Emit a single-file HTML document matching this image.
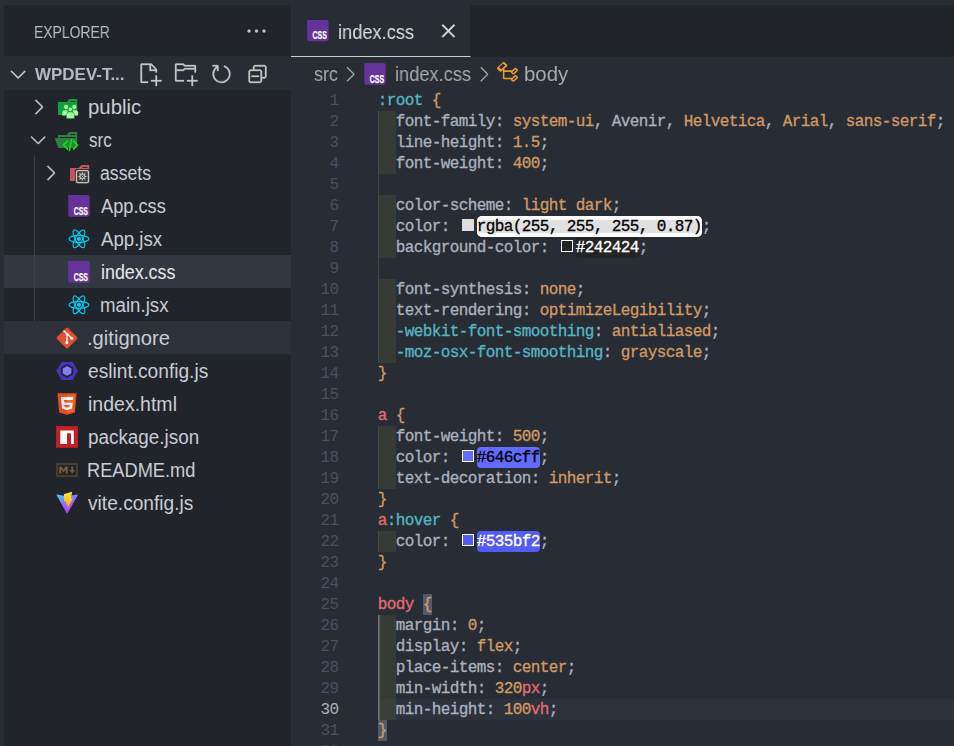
<!DOCTYPE html>
<html>
<head>
<meta charset="utf-8">
<title>index.css</title>
<style>
*{box-sizing:border-box;margin:0;padding:0}
html,body{width:954px;height:746px;overflow:hidden;background:#282c34}
body{position:relative;font-family:"Liberation Sans",sans-serif;color:#c5cad3}
.abs{position:absolute}
#side{left:4px;top:5px;width:287px;height:741px;background:#21252b}
#sechead{left:0;top:56px;width:291px;height:34px;background:#282c34}
#tabs{left:291px;top:5px;width:663px;height:52px;background:#21252b}
#tab{left:291px;top:5px;width:180px;height:52px;background:#282c34;border-bottom:1px solid #cdcdcd;border-right:1px solid #1d2025}
.ui{position:absolute;white-space:nowrap;font-size:19.5px;line-height:33px;height:33px;color:#c8ccd4;transform-origin:0 50%}
.row{position:absolute;left:4px;width:287px;height:33px}
/* code */
#code{left:0;top:90px;width:954px;height:656px}
.ln{position:absolute;left:300px;width:38.4px;text-align:right;font-family:"Liberation Mono",monospace;font-size:16px;letter-spacing:-0.6px;line-height:21px;height:21px;color:#495162;margin-top:1px}
.cl{position:absolute;left:377.7px;white-space:pre;font-family:"Liberation Mono",monospace;font-size:16px;letter-spacing:-0.6px;line-height:21px;height:21px;color:#abb2bf;-webkit-text-stroke:0.3px currentColor;margin-top:1px}
.ind{position:absolute;left:378px;width:18px;background:#373b35}
.gl{position:absolute;left:378px;width:1.4px;background:#3d424a}
.c{color:#56b6c2}.o{color:#d19a66}.r{color:#e06c75}.g{color:#abb2bf}
.sw{display:inline-block;width:12px;height:12px;margin:0 3px;vertical-align:0px;border:1px solid #eee}
.hl{display:inline-block;height:21px;border-radius:4px;margin-top:-1px;vertical-align:top;padding-top:1px}
.bm{background:#515a6b;display:inline-block;height:21px;margin-top:-1px;vertical-align:top;padding-top:1px}
</style>
</head>
<body>
<div id="side" class="abs"></div>
<div id="sechead" class="abs"></div>
<div id="tabs" class="abs"></div>
<div id="tab" class="abs"></div>

<div class="row abs" style="top:255px;background:#323842"></div>
<div class="row abs" style="top:321px;background:#2c313a"></div>
<div class="ui" style="left:87.77px;top:91px;font-size:19.5px;font-weight:normal;color:#c8ccd4;transform:scaleX(1.0460)">public</div>
<div class="ui" style="left:88.75px;top:124px;font-size:19.5px;font-weight:normal;color:#c8ccd4;transform:scaleX(0.8704)">src</div>
<div class="ui" style="left:100.05px;top:157px;font-size:19.5px;font-weight:normal;color:#c8ccd4;transform:scaleX(0.9071)">assets</div>
<div class="ui" style="left:100.74px;top:190px;font-size:19.5px;font-weight:normal;color:#c8ccd4;transform:scaleX(0.9343)">App.css</div>
<div class="ui" style="left:100.76px;top:223px;font-size:19.5px;font-weight:normal;color:#c8ccd4;transform:scaleX(0.9554)">App.jsx</div>
<div class="ui" style="left:101.19px;top:256px;font-size:19.5px;font-weight:normal;color:#e6e8ec;transform:scaleX(0.9146)">index.css</div>
<div class="ui" style="left:99.85px;top:289px;font-size:19.5px;font-weight:normal;color:#c8ccd4;transform:scaleX(0.9577)">main.jsx</div>
<div class="ui" style="left:87.36px;top:322px;font-size:19.5px;font-weight:normal;color:#c8ccd4;transform:scaleX(1.0342)">.gitignore</div>
<div class="ui" style="left:88.41px;top:355px;font-size:19.5px;font-weight:normal;color:#c8ccd4;transform:scaleX(0.9820)">eslint.config.js</div>
<div class="ui" style="left:88.40px;top:388px;font-size:19.5px;font-weight:normal;color:#c8ccd4;transform:scaleX(1.0011)">index.html</div>
<div class="ui" style="left:88.41px;top:421px;font-size:19.5px;font-weight:normal;color:#c8ccd4;transform:scaleX(0.9675)">package.json</div>
<div class="ui" style="left:87.48px;top:454px;font-size:19.5px;font-weight:normal;color:#c8ccd4;transform:scaleX(0.9351)">README.md</div>
<div class="ui" style="left:88.39px;top:487px;font-size:19.5px;font-weight:normal;color:#c8ccd4;transform:scaleX(0.9824)">vite.config.js</div>

<svg class="abs" style="left:0;top:0" width="954" height="746" viewBox="0 0 954 746">
<defs>
<path id="chr" d="M10.072 8.024L5.715 3.667l.618-.62L11 7.716v.618L6.333 13l-.618-.619 4.357-4.357z"/>
<path id="chd" d="M7.976 10.072l4.357-4.357.62.618L8.284 11h-.618L3 6.333l.619-.618 4.357 4.357z"/>
<g id="cssi">
<path d="M0 0H19.2Q21.5 0 21.5 2.3V19.3Q21.5 21.8 19 21.8H2.6Q0 21.8 0 19.2Z" fill="#66339a"/>
<text x="5.5" y="20" font-family="Liberation Sans, sans-serif" font-weight="bold" font-size="11.2" fill="#fff" stroke="#fff" stroke-width="0.25" textLength="14.2" lengthAdjust="spacingAndGlyphs">CSS</text>
</g>
<g id="react" fill="none" stroke="#05c8ee" stroke-width="1.25">
<ellipse cx="0" cy="0" rx="10" ry="3.6"/>
<ellipse cx="0" cy="0" rx="10" ry="3.6" transform="rotate(60)"/>
<ellipse cx="0" cy="0" rx="10" ry="3.6" transform="rotate(120)"/>
<circle cx="0" cy="0" r="2.1" fill="#05c8ee" stroke="none"/>
</g>
<linearGradient id="vg" x1="0" y1="0" x2="0.55" y2="1"><stop offset="0" stop-color="#41d1ff"/><stop offset="0.55" stop-color="#8f6cff"/><stop offset="1" stop-color="#bd34fe"/></linearGradient>
<linearGradient id="vb" x1="0" y1="0" x2="0" y2="1"><stop offset="0" stop-color="#ffe24a"/><stop offset="0.5" stop-color="#ffc61a"/><stop offset="1" stop-color="#ffa800"/></linearGradient>
</defs>
<!-- chevrons -->
<g fill="#c8c8c8" stroke="#c8c8c8" stroke-width="0.2">
<use href="#chd" transform="translate(6.2 62) scale(1.5)"/>
<use href="#chr" transform="translate(26.5 95) scale(1.5)"/>
<use href="#chd" transform="translate(26.2 127.6) scale(1.5)"/>
<use href="#chr" transform="translate(38.5 161) scale(1.5)"/>
</g>
<!-- indent guide -->
<rect x="34" y="156" width="1" height="165" fill="#3b4048"/>
<!-- folder public -->
<g>
<path d="M58 102H66.8L68.6 99.6Q69 99 69.8 99H77.2V115H58Z" fill="#10a13b"/>
<rect x="70.2" y="101.1" width="5.2" height="0.9" fill="#21252b"/>
<g fill="#a9f8a2">
<circle cx="66.1" cy="107" r="2.15"/><circle cx="74.4" cy="107" r="2.15"/>
<path d="M62.3 115.6V112.6Q62.3 110.2 64.7 110.2H67.5V115.6Z"/>
<path d="M78.1 115.6V112.6Q78.1 110.2 75.7 110.2H72.9V115.6Z"/>
</g>
<g fill="#a9f8a2" stroke="#10a13b" stroke-width="0.6">
<circle cx="70.4" cy="109.3" r="2.1"/>
<path d="M66.5 118.3V114.6Q66.5 112 69.1 112H71.7Q74.3 112 74.3 114.6V118.3Q70.4 118.8 66.5 118.3Z"/>
</g>
</g>
<!-- folder src (open) -->
<g>
<path d="M58 135H66.8L68.6 132.7Q69 132.1 69.8 132.1H77.1V147.8H58Z" fill="#2f8046"/>
<rect x="70.2" y="134.1" width="5.2" height="0.9" fill="#21252b"/>
<rect x="60" y="137" width="15.2" height="1.1" fill="#21252b"/>
<path d="M54.9 138.2H74.8L76.3 147.8H58Z" fill="#2f8046"/>
<g fill="none" stroke="#14dc18" stroke-width="1.7" stroke-linecap="round" stroke-linejoin="round">
<path d="M67.5 141.1L63.4 144.9L67.6 149.1"/>
<path d="M71.5 139.6L69.4 150.4"/>
<path d="M73.5 141.1L77.5 144.9L73.5 149.1"/>
</g>
</g>
<!-- folder assets -->
<g>
<path d="M70 168H78.9L80.7 165.7Q81.1 165.1 81.9 165.1H89.2V181H70Z" fill="#c4555a"/>
<rect x="82.2" y="167" width="5.3" height="0.9" fill="#21252b"/>
<rect x="74.9" y="169" width="15.1" height="15.2" rx="1.5" fill="#333537"/>
<rect x="76.5" y="170.6" width="12" height="12" rx="1.6" fill="#3a3a3a" stroke="#c4c4c4" stroke-width="1.3"/>
<g fill="#c8c8c8">
<path d="M82.4 171.7L83.5 174.2H81.3Z"/><path d="M82.4 181.1L83.5 178.6H81.3Z"/>
<path d="M77.7 176.4L80.2 175.3V177.5Z"/><path d="M87.1 176.4L84.6 175.3V177.5Z"/>
<path d="M79.1 173.1L81.6 174L80 175.6Z"/><path d="M85.7 173.1L83.2 174L84.8 175.6Z"/>
<path d="M79.1 179.7L81.6 178.8L80 177.2Z"/><path d="M85.7 179.7L83.2 178.8L84.8 177.2Z"/>
</g>
<circle cx="82.4" cy="176.4" r="2" fill="none" stroke="#c8c8c8" stroke-width="0.9"/>
<circle cx="82.6" cy="176.4" r="0.6" fill="#c8c8c8"/>
</g>
<!-- css / react file icons -->
<use href="#cssi" transform="translate(68.2 195)"/>
<use href="#react" transform="translate(78.95 238.85)"/>
<use href="#cssi" transform="translate(68.2 261)"/>
<use href="#react" transform="translate(78.95 304.85)"/>
<!-- git -->
<g>
<rect x="-7.8" y="-7.8" width="15.6" height="15.6" rx="1.5" transform="translate(67.05 337.95) rotate(45)" fill="#e14e31"/>
<g stroke="#f2f2f2" stroke-width="1.4" fill="none" stroke-linecap="butt">
<path d="M63.5 330.4L71.5 338.1"/><path d="M67.1 334.2L66.9 342.5"/>
</g>
<g fill="#ffffff"><circle cx="67.1" cy="334" r="1.5"/><circle cx="71.6" cy="338.2" r="1.55"/><circle cx="66.9" cy="342.6" r="1.6"/></g>
</g>
<!-- eslint -->
<g>
<path d="M56.4 371L61.6 361.9H72.6L77.8 371L72.6 380.1H61.6Z" fill="#4b32c3"/>
<path d="M67.05 364L73.2 367.5V374.4L67.05 377.9L60.9 374.4V367.5Z" fill="#21252b"/>
<path d="M67.05 366.1L71.4 368.5V373.4L67.05 375.8L62.7 373.4V368.5Z" fill="#8080f2"/>
</g>
<!-- html5 -->
<g>
<path d="M57.5 393.2H76.6L74.9 412.5L67.05 414.7L59.2 412.5Z" fill="#e44d26"/>
<path d="M67.05 394.8H75L73.5 411.3L67.05 413.1Z" fill="#f16529"/>
<path d="M61 397H73.1L72.85 400.1H64L64.2 402.7H72.6L72 408.6L67.05 410.1L62.1 408.6L61.85 405.6H64.3L64.45 407L67.05 407.8L69.65 407L69.9 404.7H61.9Z" fill="#ffffff"/>
<path d="M61 397H67.05V400.1H64L64.2 402.7H67.05V404.7H61.9ZM61.85 405.6H64.3L64.45 407L67.05 407.8V410.1L62.1 408.6Z" fill="#ebebeb"/>
</g>
<!-- npm -->
<g>
<rect x="56.1" y="426.1" width="21.8" height="21.7" fill="#c42127"/>
<path d="M60.3 430.4H73.8V443.9H71V433.2H67V443.9H60.3Z" fill="#ffffff"/>
</g>
<!-- markdown -->
<g>
<rect x="57.05" y="463.95" width="19.9" height="12.1" fill="none" stroke="#493c2f" stroke-width="2.1"/>
<path d="M59.3 473.6V466.4H61.4L63.5 469.6L65.6 466.4H67.7V473.6H65.7V469.4L63.5 472.4L61.3 469.4V473.6Z" fill="#7a5a37"/>
<path d="M71.3 466.4H73.2V470.1H75.2L72.25 473.4L69.3 470.1H71.3Z" fill="#7a5a37"/>
</g>
<!-- vite -->
<g>
<path d="M56.6 494.9Q56 494.6 56.8 494.5L67 496.3L77.3 494.5Q78.1 494.6 77.6 495.4L67.7 513.1Q67.1 513.9 66.5 513.1Z" fill="url(#vg)"/>
<path d="M72.2 491.7L64 493.9V501.6L66.4 501.3L66 504.7L68 504.4L67 509.8L72.9 498.2L70.9 498.6Z" fill="url(#vb)"/>
</g>
<!-- header actions -->
<g fill="#c5c5c5" stroke="#c5c5c5" stroke-width="0.2" transform="translate(0.5 0)">
<path transform="translate(244 19) scale(1.5)" d="M4 8a1 1 0 1 1-2 0 1 1 0 0 1 2 0zm5 0a1 1 0 1 1-2 0 1 1 0 0 1 2 0zm5 0a1 1 0 1 1-2 0 1 1 0 0 1 2 0z"/>
<path transform="translate(137 62) scale(1.5)" fill-rule="evenodd" d="M9.5 1.1l3.4 3.5.1.4v2h-1V6H8V2H3v11h4v1H2.5l-.5-.5v-12l.5-.5h6.7l.3.1zM9 2v3h2.9L9 2zm4 14h-1v-3H9v-1h3V9h1v3h3v1h-3v3z"/>
<path transform="translate(173 62) scale(1.5)" fill-rule="evenodd" d="M14.5 2H7.71l-.85-.85L6.51 1h-5l-.5.5v11l.5.5H7v-1H1.99V6h4.49l.35-.15.86-.86H14v1.5l-.001.51h1.011V2.5L14.5 2zm-.51 2h-6.5l-.35.15-.86.86H2v-3h4.29l.85.85.36.15H14l-.01.99zM13 16h-1v-3H9v-1h3V9h1v3h3v1h-3v3z"/>
<path transform="translate(209 62) scale(1.5)" fill-rule="evenodd" d="M4.681 3H2V2h3.5l.5.5V6H5V4a5 5 0 1 0 4.53-.761l.302-.954A6 6 0 1 1 4.681 3z"/>
<g transform="translate(245 62) scale(1.5)"><path d="M9 9H4v1h5V9z"/><path fill-rule="evenodd" d="M5 3l1-1h7l1 1v7l-1 1h-2v2l-1 1H3l-1-1V6l1-1h2V3zm1 2h4l1 1v4h2V3H6v2zm4 1H3v7h7V6z"/></g>
</g>
<!-- tab -->
<use href="#cssi" transform="translate(307.1 20) scale(1 0.975)"/>
<path transform="translate(436.4 18.9) scale(1.5)" fill="#dcdcdc" stroke="#dcdcdc" stroke-width="0.25" d="M8 8.707l3.646 3.647.708-.707L8.707 8l3.647-3.646-.707-.708L8 7.293 4.354 3.646l-.707.708L7.293 8l-3.646 3.646.707.708L8 8.707z"/>
<!-- breadcrumbs -->
<g fill="#a6a6a6">
<use href="#chr" transform="translate(338 62.3) scale(1.5)"/>
<use href="#chr" transform="translate(471.7 62.3) scale(1.5)"/>
</g>
<use href="#cssi" transform="translate(364.3 63)"/>
<path transform="translate(495.5 60.5) scale(1.53 1.45)" fill="#ee9d28" fill-rule="evenodd" d="M11.34 9.71h.71l2.67-2.67v-.71L13.38 5h-.7l-1.82 1.81h-5V5.560l1.860-1.850V3l-2-2H5L1 5v.71l2 2h.71l1.140-1.150v5.790l.5.5H10v.52l1.330 1.340h.71l2.670-2.670v-.71L13.370 10h-.7l-1.860 1.850h-5v-4H10v.48l1.340 1.380zm1.690-3.650l.63.63-2 2-.63-.63 2-2zm-8-4l1.320 1.320-2.680 2.670-1.320-1.330 2.680-2.660zm8 8.990l.63.630-2 2-.63-.63 2-2z"/>
</svg>

<!-- code -->
<div id="code" class="abs">
<div class="abs" style="left:378px;top:609px;width:576px;height:21px;background:#2c313c"></div>
<div class="ind" style="top:21px;height:63px"></div>
<div class="gl" style="top:21px;height:63px;background:#474b45"></div>
<div class="ind" style="top:105px;height:63px"></div>
<div class="gl" style="top:105px;height:63px;background:#474b45"></div>
<div class="ind" style="top:189px;height:84px"></div>
<div class="gl" style="top:189px;height:84px;background:#474b45"></div>
<div class="ind" style="top:336px;height:63px"></div>
<div class="gl" style="top:336px;height:63px;background:#474b45"></div>
<div class="ind" style="top:441px;height:21px"></div>
<div class="gl" style="top:441px;height:21px;background:#474b45"></div>
<div class="ind" style="top:525px;height:105px"></div>
<div class="gl" style="top:525px;height:105px;background:#474b45"></div>
<div class="ind" style="top:609px;height:21px;background:#3b3f3a"></div>
<div class="gl" style="top:84px;height:21px"></div>
<div class="gl" style="top:168px;height:21px"></div>
<div class="gl" style="top:525px;height:105px;background:linear-gradient(90deg,#72756b 50%,#5b5f57 50%);width:2px"></div>
<div class="ln" style="top:0px;color:#495162">1</div>
<div class="cl" style="top:0px"><span class="c">:root</span><span class="g"> </span><span class="o">{</span></div>
<div class="ln" style="top:21px;color:#495162">2</div>
<div class="cl" style="top:21px"><span class="g">  font-family: </span><span class="o">system-ui</span><span class="g">, Avenir, </span><span class="o">Helvetica</span><span class="g">, </span><span class="o">Arial</span><span class="g">, </span><span class="o">sans-serif</span><span class="g">;</span></div>
<div class="ln" style="top:42px;color:#495162">3</div>
<div class="cl" style="top:42px"><span class="g">  line-height: </span><span class="o">1.5</span><span class="g">;</span></div>
<div class="ln" style="top:63px;color:#495162">4</div>
<div class="cl" style="top:63px"><span class="g">  font-weight: </span><span class="o">400</span><span class="g">;</span></div>
<div class="ln" style="top:84px;color:#495162">5</div>
<div class="ln" style="top:105px;color:#495162">6</div>
<div class="cl" style="top:105px"><span class="g">  color-scheme: </span><span class="o">light dark</span><span class="g">;</span></div>
<div class="ln" style="top:126px;color:#495162">7</div>
<div class="cl" style="top:126px"><span class="g">  color: </span><span class="sw" style="background:#dedede;border-color:#dedede"></span><span class="hl" style="background:#e1e1e1;color:#000000;box-shadow:inset 0 0 0 4px #fcfcfc;border-radius:5px;">rgba(255, 255, 255, 0.87)</span><span class="g">;</span></div>
<div class="ln" style="top:147px;color:#495162">8</div>
<div class="cl" style="top:147px"><span class="g">  background-color: </span><span class="sw" style="background:#242424;border-color:#ffffff"></span><span class="hl" style="background:#242424;color:#ffffff;">#242424</span><span class="g">;</span></div>
<div class="ln" style="top:168px;color:#495162">9</div>
<div class="ln" style="top:189px;color:#495162">10</div>
<div class="cl" style="top:189px"><span class="g">  font-synthesis: </span><span class="o">none</span><span class="g">;</span></div>
<div class="ln" style="top:210px;color:#495162">11</div>
<div class="cl" style="top:210px"><span class="g">  text-rendering: </span><span class="o">optimizeLegibility</span><span class="g">;</span></div>
<div class="ln" style="top:231px;color:#495162">12</div>
<div class="cl" style="top:231px"><span class="c">  -webkit-font-smoothing</span><span class="g">: </span><span class="o">antialiased</span><span class="g">;</span></div>
<div class="ln" style="top:252px;color:#495162">13</div>
<div class="cl" style="top:252px"><span class="c">  -moz-osx-font-smoothing</span><span class="g">: </span><span class="o">grayscale</span><span class="g">;</span></div>
<div class="ln" style="top:273px;color:#495162">14</div>
<div class="cl" style="top:273px"><span class="o">}</span></div>
<div class="ln" style="top:294px;color:#495162">15</div>
<div class="ln" style="top:315px;color:#495162">16</div>
<div class="cl" style="top:315px"><span class="r">a</span><span class="g"> </span><span class="o">{</span></div>
<div class="ln" style="top:336px;color:#495162">17</div>
<div class="cl" style="top:336px"><span class="g">  font-weight: </span><span class="o">500</span><span class="g">;</span></div>
<div class="ln" style="top:357px;color:#495162">18</div>
<div class="cl" style="top:357px"><span class="g">  color: </span><span class="sw" style="background:#646cff;border-color:#ffffff"></span><span class="hl" style="background:#646cff;color:#000000;">#646cff</span><span class="g">;</span></div>
<div class="ln" style="top:378px;color:#495162">19</div>
<div class="cl" style="top:378px"><span class="g">  text-decoration: </span><span class="o">inherit</span><span class="g">;</span></div>
<div class="ln" style="top:399px;color:#495162">20</div>
<div class="cl" style="top:399px"><span class="o">}</span></div>
<div class="ln" style="top:420px;color:#495162">21</div>
<div class="cl" style="top:420px"><span class="r">a</span><span class="c">:hover</span><span class="g"> </span><span class="o">{</span></div>
<div class="ln" style="top:441px;color:#495162">22</div>
<div class="cl" style="top:441px"><span class="g">  color: </span><span class="sw" style="background:#535bf2;border-color:#ffffff"></span><span class="hl" style="background:#535bf2;color:#ffffff;">#535bf2</span><span class="g">;</span></div>
<div class="ln" style="top:462px;color:#495162">23</div>
<div class="cl" style="top:462px"><span class="o">}</span></div>
<div class="ln" style="top:483px;color:#495162">24</div>
<div class="ln" style="top:504px;color:#495162">25</div>
<div class="cl" style="top:504px"><span class="r">body</span><span class="g"> </span><span class="o bm">{</span></div>
<div class="ln" style="top:525px;color:#495162">26</div>
<div class="cl" style="top:525px"><span class="g">  margin: </span><span class="o">0</span><span class="g">;</span></div>
<div class="ln" style="top:546px;color:#495162">27</div>
<div class="cl" style="top:546px"><span class="g">  display: </span><span class="o">flex</span><span class="g">;</span></div>
<div class="ln" style="top:567px;color:#495162">28</div>
<div class="cl" style="top:567px"><span class="g">  place-items: </span><span class="o">center</span><span class="g">;</span></div>
<div class="ln" style="top:588px;color:#495162">29</div>
<div class="cl" style="top:588px"><span class="g">  min-width: </span><span class="o">320</span><span class="r">px</span><span class="g">;</span></div>
<div class="ln" style="top:609px;color:#abb2bf">30</div>
<div class="cl" style="top:609px"><span class="g">  min-height: </span><span class="o">100</span><span class="r">vh</span><span class="g">;</span></div>
<div class="ln" style="top:630px;color:#495162">31</div>
<div class="cl" style="top:630px"><span class="o bm">}</span></div>
<div class="ln" style="top:651px;color:#495162">32</div>
</div>
<div class="ui" style="left:33.79px;top:16px;font-size:16.5px;font-weight:normal;color:#b9bec8;transform:scaleX(0.8432);will-change:transform">EXPLORER</div>
<div class="ui" style="left:34.61px;top:58px;font-size:16.5px;font-weight:bold;color:#b4bac6;transform:scaleX(1.0279);will-change:transform">WPDEV-T...</div>
<div class="ui" style="left:338.10px;top:16px;font-size:19.5px;font-weight:normal;color:#dedede;transform:scaleX(0.9362);will-change:transform">index.css</div>
<div class="ui" style="left:314.42px;top:58px;font-size:19.5px;font-weight:normal;color:#a9a9a9;transform:scaleX(0.9192);will-change:transform">src</div>
<div class="ui" style="left:395.10px;top:58px;font-size:19.5px;font-weight:normal;color:#a9a9a9;transform:scaleX(0.9362);will-change:transform">index.css</div>
<div class="ui" style="left:523.93px;top:58px;font-size:19.5px;font-weight:normal;color:#a9a9a9;transform:scaleX(1.0439);will-change:transform">body</div>
</body>
</html>
